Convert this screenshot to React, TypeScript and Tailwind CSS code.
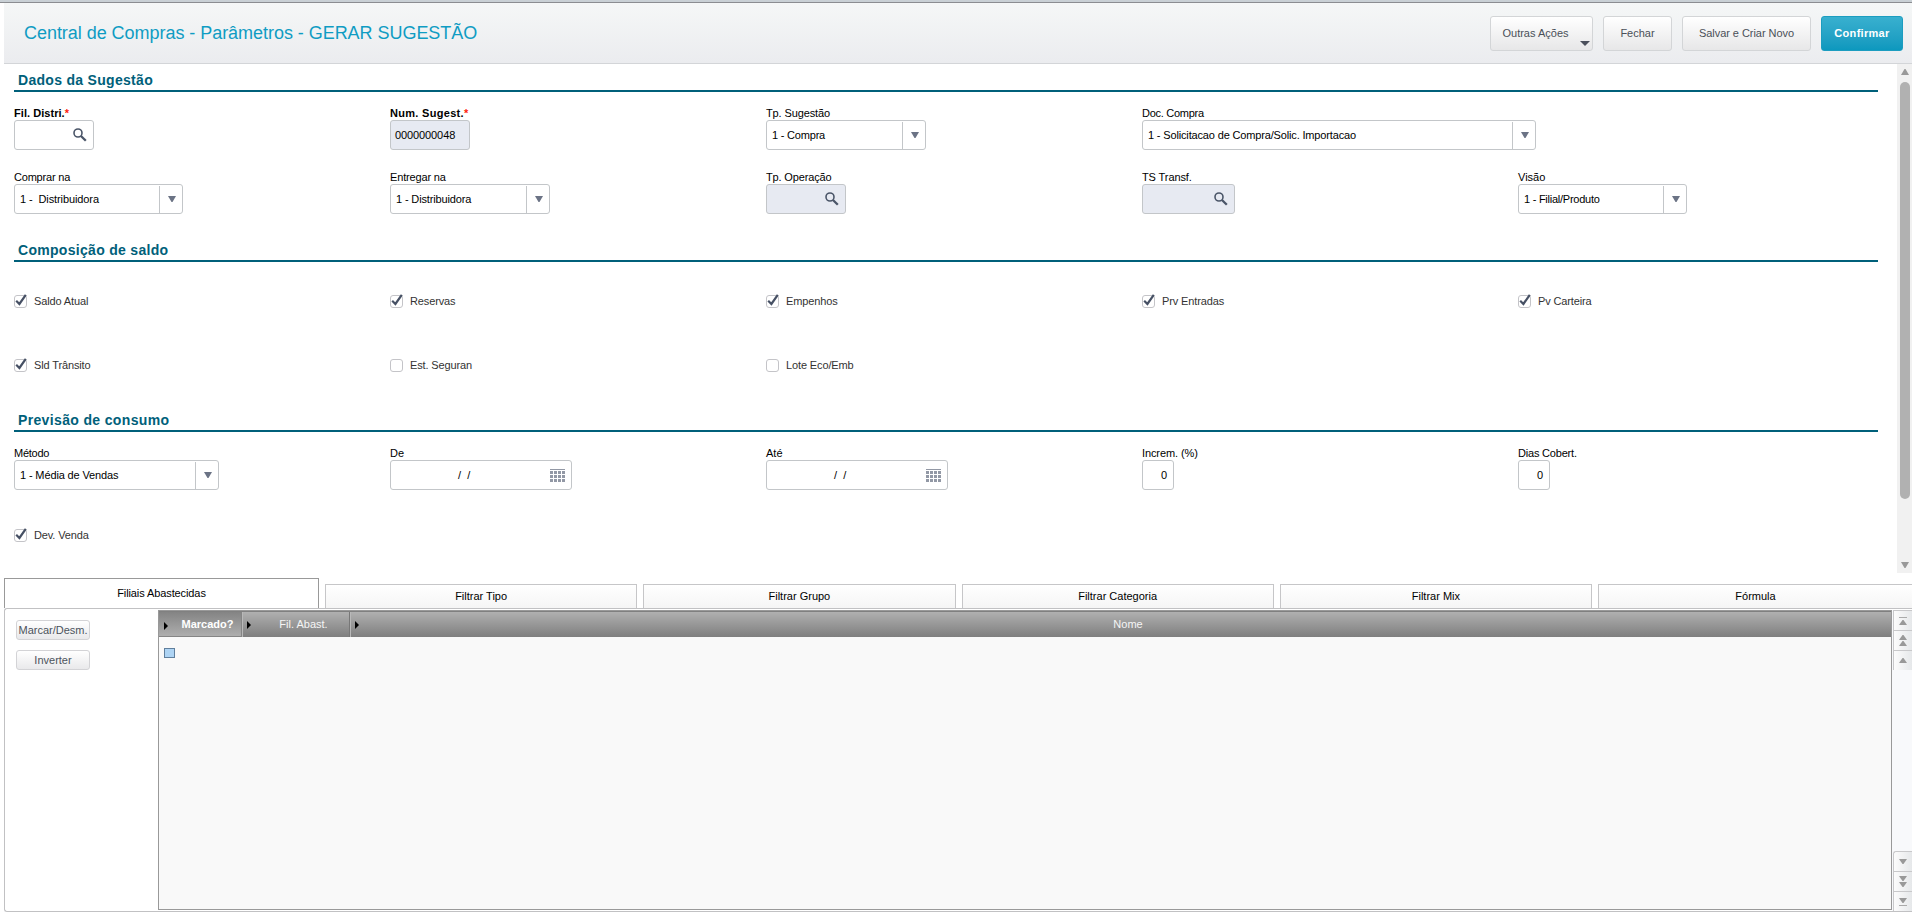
import { useState } from "react";
import clsx from "clsx";

interface Field {
  type: "text" | "search" | "select" | "date" | "number" | "check";
  label: string;
  value?: string;
  checked?: boolean;
  required?: boolean;
  disabled?: boolean;
  width?: string;
  tracking?: string;
  valueTracking?: string;
}

interface Section {
  title: string;
  tracking: string;
  rows: Field[][];
}

const sections: Section[] = [
  {
    title: "Dados da Sugestão",
    tracking: "tracking-[0.3px]",
    rows: [
      [
        { type: "search", label: "Fil. Distri.", required: true, width: "w-20", tracking: "tracking-[0.05px]" },
        { type: "text", label: "Num. Sugest.", value: "0000000048", required: true, disabled: true, width: "w-20", tracking: "tracking-[0.3px]", valueTracking: "tracking-[-0.1px]" },
        { type: "select", label: "Tp. Sugestão", value: "1 - Compra", width: "w-40", tracking: "tracking-[-0.12px]", valueTracking: "tracking-[-0.2px]" },
        { type: "select", label: "Doc. Compra", value: "1 - Solicitacao de Compra/Solic. Importacao", width: "w-[394px]", tracking: "tracking-[-0.27px]", valueTracking: "tracking-[-0.155px]" },
      ],
      [
        { type: "select", label: "Comprar na", value: "1 -  Distribuidora", width: "w-[169px]", tracking: "tracking-[-0.2px]", valueTracking: "tracking-[-0.1px]" },
        { type: "select", label: "Entregar na", value: "1 - Distribuidora", width: "w-40", tracking: "tracking-[-0.16px]", valueTracking: "tracking-[-0.14px]" },
        { type: "search", label: "Tp. Operação", disabled: true, width: "w-20", tracking: "tracking-[-0.15px]" },
        { type: "search", label: "TS Transf.", disabled: true, width: "w-[93px]", tracking: "tracking-[-0.1px]" },
        { type: "select", label: "Visão", value: "1 - Filial/Produto", width: "w-[169px]", valueTracking: "tracking-[-0.25px]" },
      ],
    ],
  },
  {
    title: "Composição de saldo",
    tracking: "tracking-[0.3px]",
    rows: [
      [
        { type: "check", label: "Saldo Atual", checked: true },
        { type: "check", label: "Reservas", checked: true },
        { type: "check", label: "Empenhos", checked: true },
        { type: "check", label: "Prv Entradas", checked: true },
        { type: "check", label: "Pv Carteira", checked: true },
      ],
      [
        { type: "check", label: "Sld Trânsito", checked: true },
        { type: "check", label: "Est. Seguran" },
        { type: "check", label: "Lote Eco/Emb" },
      ],
    ],
  },
  {
    title: "Previsão de consumo",
    tracking: "tracking-[0.35px]",
    rows: [
      [
        { type: "select", label: "Método", value: "1 - Média de Vendas", width: "w-[205px]", tracking: "tracking-[-0.25px]", valueTracking: "tracking-[-0.13px]" },
        { type: "date", label: "De", value: "/  /", width: "w-[182px]" },
        { type: "date", label: "Até", value: "/  /", width: "w-[182px]" },
        { type: "number", label: "Increm. (%)", value: "0", width: "w-8", tracking: "tracking-[-0.1px]" },
        { type: "number", label: "Dias Cobert.", value: "0", width: "w-8", tracking: "tracking-[-0.2px]" },
      ],
      [{ type: "check", label: "Dev. Venda", checked: true }],
    ],
  },
];

const tabs = ["Filiais Abastecidas", "Filtrar Tipo", "Filtrar Grupo", "Filtrar Categoria", "Filtrar Mix", "Fórmula"];

const SearchIcon = () => (
  <svg width="14" height="14" viewBox="0 0 14 14" fill="none" stroke="#4a5568">
    <circle cx="5" cy="5" r="4" strokeWidth="1.6" />
    <path d="M8 8 L12.8 12.8" strokeWidth="2.3" />
  </svg>
);

const CalendarIcon = () => (
  <svg width="15" height="13" viewBox="0 0 15 13" fill="#9298a5">
    <path d="M0 0h15v1H0z" />
    {[2, 6, 10].map((y) => [0, 4, 8, 12].map((x) => <rect key={`${x}-${y}`} x={x} y={y} width="3" height="3" />))}
  </svg>
);

const Triangle = ({ up = false, className }: { up?: boolean; className?: string }) => (
  <svg width="8" height="6" viewBox="0 0 8 6" preserveAspectRatio="none" fill="currentColor" className={className}>
    <path d={up ? "M0 6 L3.5 0 L4.5 0 L8 6z" : "M0 0 L8 0 L4.5 6 L3.5 6z"} />
  </svg>
);

const HeaderArrow = ({ className }: { className?: string }) => (
  <svg width="4" height="8" viewBox="0 0 4 8" className={className}>
    <path d="M0 0 L4 4 L0 8z" fill="#000" />
  </svg>
);

function CheckField({ field }: { field: Field }) {
  const [checked, setChecked] = useState(!!field.checked);

  return (
    <button onClick={() => setChecked(!checked)} className="mt-8 flex h-[15px] items-center gap-[6px] text-[#333]">
      <svg width="14" height="15" viewBox="0 0 14 15" fill="none">
        <rect x="0.5" y="1.5" width="12" height="12" rx="2.5" fill="#fff" stroke="#c4c4c8" />
        {checked && <path d="M2.2 6.8 L5.4 10 L11.8 0.8" stroke="#465064" strokeWidth="2.2" />}
      </svg>
      <span className="tracking-[-0.13px] whitespace-pre">{field.label}</span>
    </button>
  );
}

function FormField({ field }: { field: Field }) {
  if (field.type === "check") return <CheckField field={field} />;

  return (
    <div className="pt-[14px]">
      <div className={clsx("h-[14px] leading-[15px] whitespace-pre", field.required && "font-bold", field.tracking)}>
        {field.label}
        {field.required && <span className="text-[#ff1a0a]">*</span>}
      </div>
      <div
        className={clsx(
          "flex h-[30px] items-center rounded-[3px] border border-[#c3c6c9]",
          field.width,
          field.disabled ? "bg-[#e7eaf2]" : "bg-white",
        )}
      >
        {field.type === "text" && <span className={clsx("pl-1", field.valueTracking)}>{field.value}</span>}
        {field.type === "search" && (
          <span className="ml-auto pr-[6px] pb-px">
            <SearchIcon />
          </span>
        )}
        {field.type === "number" && <span className="ml-auto pr-[6px]">{field.value}</span>}
        {field.type === "date" && (
          <>
            <span className="flex-1 pl-[67px] whitespace-pre">{field.value}</span>
            <span className="pt-px pr-[6px]">
              <CalendarIcon />
            </span>
          </>
        )}
        {field.type === "select" && (
          <>
            <span className={clsx("flex-1 pl-[5px] whitespace-pre", field.valueTracking)}>{field.value}</span>
            <span className="mt-px flex h-[27px] w-[23px] items-center justify-center border-l border-[#c3c6c9] pb-px pl-[2px] text-[#6b7385]">
              <Triangle />
            </span>
          </>
        )}
      </div>
    </div>
  );
}

function NavButton({ children, className }: { children: React.ReactNode; className?: string }) {
  return (
    <button
      className={clsx(
        "flex w-[19px] flex-col items-center justify-center border-l border-[#c8c8ca] bg-linear-to-r from-[#fcfcfc] to-[#e6e8ea] text-[#999]",
        className,
      )}
    >
      {children}
    </button>
  );
}

const headerButton =
  "flex h-[35px] items-center justify-center rounded-[3px] border border-[#d3d5d7] bg-linear-to-b from-white to-[#e7e7e8] text-[#4a5058]";

const sideButton =
  "h-5 w-[74px] rounded-[3px] border border-[#d3d3d6] bg-linear-to-b from-white to-[#e9e9eb] leading-[18px] text-[#4c535c] whitespace-nowrap";

export default function App() {
  const [activeTab, setActiveTab] = useState(0);

  return (
    <div className="flex h-[915px] w-[1912px] flex-col overflow-hidden bg-white font-['Liberation_Sans',Arial,sans-serif] text-[11px] leading-[15px] text-black">
      <div className="h-[3px] shrink-0 border-b border-[#8b8d91] bg-[#c9d0d5]" />

      {/* Header */}
      <header className="ml-1 flex h-[61px] shrink-0 justify-between border-b border-[#d3d5d8] bg-linear-to-b from-[#f5f7f7] to-[#ebecef] pt-[13px] pr-[9px] pl-5">
        <h1 className="text-[18px] leading-[34px] tracking-[-0.04px] text-[#0f9cc3]">
          Central de Compras - Parâmetros - GERAR SUGESTÃO
        </h1>
        <div className="flex gap-[10px]">
          <button className={clsx(headerButton, "relative w-[103px] pr-3")}>
            Outras Ações
            <svg width="10" height="5" viewBox="0 0 10 5" className="absolute right-[2px] bottom-[4px]">
              <path d="M0 0h10L5 5z" fill="#4a4f5b" />
            </svg>
          </button>
          <button className={clsx(headerButton, "w-[69px]")}>Fechar</button>
          <button className={clsx(headerButton, "w-[129px] tracking-[-0.05px]")}>Salvar e Criar Novo</button>
          <button className="flex h-[35px] w-[82px] items-center justify-center rounded-[3px] border border-[#1c9dc0] bg-linear-to-b from-[#38b0cf] to-[#0c98be] font-bold tracking-[0.3px] text-white">
            Confirmar
          </button>
        </div>
      </header>

      {/* Form */}
      <main className="flex h-[509px] shrink-0 overflow-hidden">
        <div className="flex-1 pl-[14px]">
          {sections.map((section) => (
            <section key={section.title} className="h-[170px]">
              <h2 className={clsx("h-7 w-[1864px] border-b-2 border-[#00607a] pl-1 text-[14px] leading-[32px] font-bold text-[#00607a]", section.tracking)}>
                {section.title}
              </h2>
              {section.rows.map((row, i) => (
                <div key={i} className="grid h-16 grid-cols-[repeat(5,376px)] items-start">
                  {row.map((field) => (
                    <FormField key={field.label} field={field} />
                  ))}
                </div>
              ))}
            </section>
          ))}
        </div>
        <div className="flex w-[15px] flex-col items-center bg-[#f1f1f1] pt-[5px] pb-[5px] text-[#999]">
          <Triangle up />
          <div className="mt-[7px] h-[417px] w-[10px] rounded-[5px] bg-[#b1b1b1]" />
          <Triangle className="mt-auto" />
        </div>
      </main>

      {/* Tabs */}
      <nav className="mt-[5px] flex h-[30px] shrink-0 items-end gap-[6px] pl-1">
        {tabs.map((tab, i) => (
          <button
            key={tab}
            onClick={() => setActiveTab(i)}
            className={clsx(
              "border border-b-0",
              i === activeTab
                ? "h-[30px] w-[315px] border-[#999] bg-white tracking-[-0.1px]"
                : "h-6 w-[312.25px] border-[#c6c6c8] bg-linear-to-b from-white to-[#f5f5f5] last:flex-1 last:border-r-0",
            )}
          >
            {tab}
          </button>
        ))}
      </nav>

      <div className="ml-1 flex h-[304px] shrink-0 rounded-l-[3px] border border-r-0 border-[#c1c1c3]">
        <div className="flex w-[153px] flex-col gap-[10px] pt-[11px] pl-[11px]">
          <button className={sideButton}>Marcar/Desm.</button>
          <button className={sideButton}>Inverter</button>
        </div>

        {/* Grid */}
        <div className="mt-px mb-px flex-1 border border-[#999] bg-[#f9f9f9]">
          <div className="flex h-[26px] items-stretch border-t border-[#808080] bg-linear-to-b from-[#b0b0b0] to-[#7f7f7f] text-[#f5f5f5]">
            <div className="flex w-[83px] items-center border-r border-b border-[#858585] bg-linear-to-b from-[#848484] to-[#aeaeae] pl-[5px] font-bold">
              <HeaderArrow className="mt-[3px]" />
              <span className="flex-1 pl-[6px] text-center text-white">Marcado?</span>
            </div>
            <div className="flex w-[108px] items-center border-r border-l border-r-[#777] border-l-[#b9b9b9] pl-1">
              <HeaderArrow className="mt-px" />
              <span className="flex-1 pl-[7px] text-center">Fil. Abast.</span>
            </div>
            <div className="flex flex-1 items-center border-l border-[#b9b9b9] pl-1">
              <HeaderArrow className="mt-px" />
              <span className="flex-1 pl-[6px] text-center">Nome</span>
            </div>
          </div>
          <div className="mt-[11px] ml-[5px] h-[10px] w-[11px] border border-[#607f9d] bg-[#aed4f4]" />
        </div>

        <div className="mt-px flex w-5 flex-col justify-between bg-[#f8f9fb] pl-px">
          <div className="flex flex-col">
            <NavButton className="h-[21px] border-t border-b">
              <div className="mb-[2px] h-px w-2 bg-[#aaa]" />
              <Triangle up className="h-[5px]" />
            </NavButton>
            <NavButton className="h-5 border-b">
              <Triangle up className="h-[5px]" />
              <Triangle up className="mt-px h-[5px]" />
            </NavButton>
            <NavButton className="h-[19px]">
              <Triangle up className="h-[5px]" />
            </NavButton>
          </div>
          <div className="flex flex-col">
            <NavButton className="h-[21px] rounded-tl-[3px] border-t border-b">
              <Triangle className="h-[5px]" />
            </NavButton>
            <NavButton className="h-5 border-b">
              <Triangle className="h-[5px]" />
              <Triangle className="mt-px h-[5px]" />
            </NavButton>
            <NavButton className="h-[19px]">
              <Triangle className="h-[5px]" />
              <div className="mt-[2px] h-px w-2 bg-[#aaa]" />
            </NavButton>
          </div>
        </div>
      </div>
    </div>
  );
}
